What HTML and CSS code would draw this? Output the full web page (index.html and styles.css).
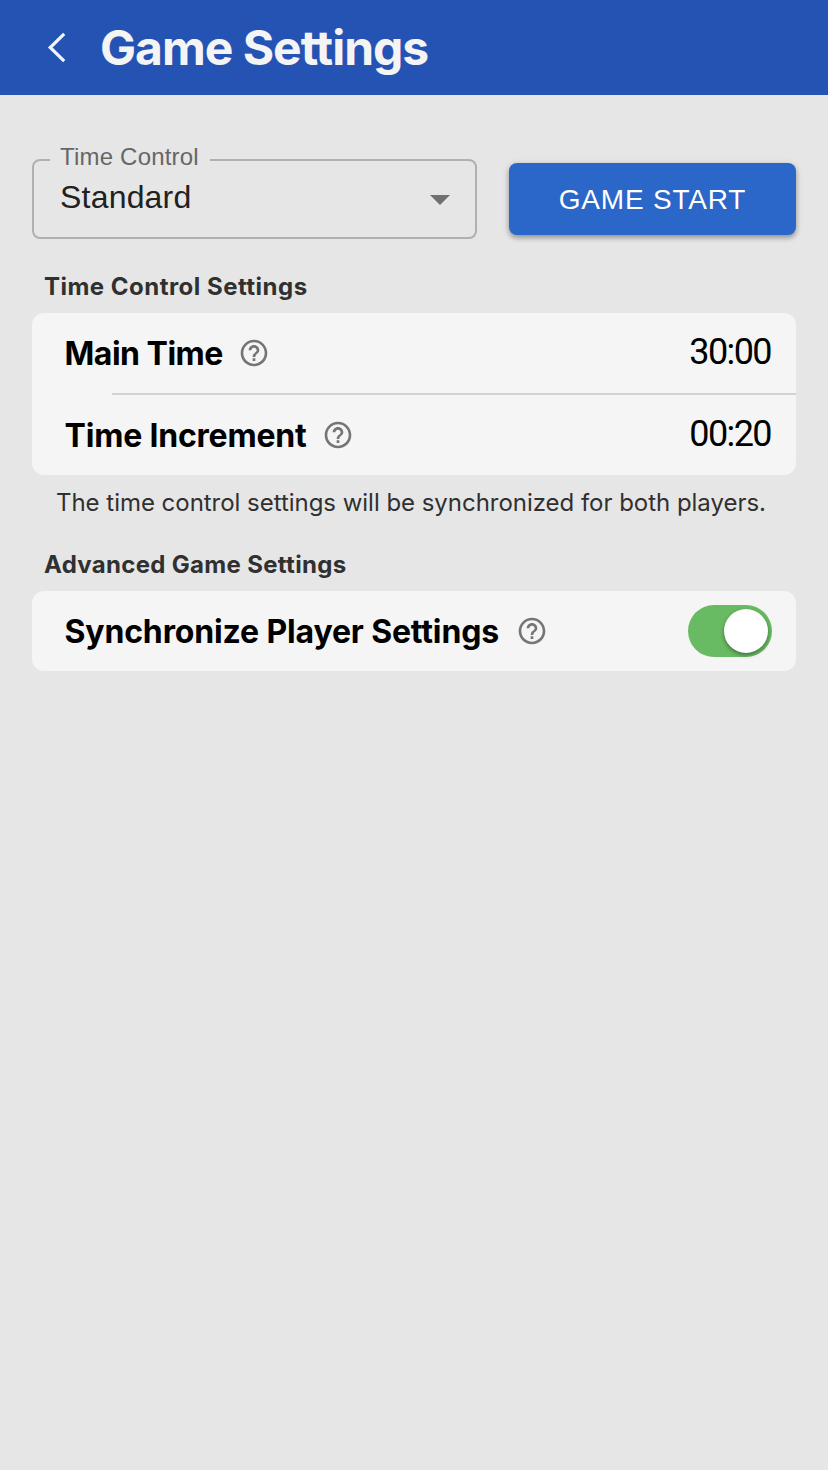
FILE: index.html
```html
<!DOCTYPE html>
<html lang="en">
<head>
<meta charset="utf-8">
<title>Game Settings</title>
<link rel="stylesheet" href="styles.css">
</head>
<body>
<svg class="sprite" aria-hidden="true">
  <symbol id="help" viewBox="0 0 24 24"><path d="M11 18h2v-2h-2v2zm1-16C6.48 2 2 6.48 2 12s4.480 10 10 10 10-4.480 10-10S17.520 2 12 2zm0 18c-4.410 0-8-3.590-8-8s3.590-8 8-8 8 3.590 8 8-3.590 8-8 8zm0-14c-2.210 0-4 1.790-4 4h2c0-1.100.9-2 2-2s2 .9 2 2c0 2-3 1.750-3 5h2c0-2.250 3-2.500 3-5 0-2.210-1.790-4-4-4z"/></symbol>
</svg>
<header class="header">
  <svg class="back" viewBox="0 0 20 32"><path d="M17.200 1.800 3.200 15.500l14 13.700"/></svg>
  <h1 class="title"><span>Game Settings</span></h1>
</header>
<main class="main">
  <div class="controls">
    <fieldset class="select">
      <legend class="select-label"><span class="label-text">Time Control</span></legend>
      <div class="select-value"><span class="value-text">Standard</span><svg class="arrow" viewBox="0 0 20 10"><path d="M0 0h20L10 10z"/></svg></div>
    </fieldset>
    <button class="start" type="button"><span>GAME START</span></button>
  </div>
  <h2 class="section-title time-title">Time Control Settings</h2>
  <section class="card">
    <div class="row divided"><span class="row-label main-label">Main Time</span><svg class="help"><use href="#help"/></svg><span class="time">30:00</span></div>
    <div class="row"><span class="row-label increment-label">Time Increment</span><svg class="help"><use href="#help"/></svg><span class="time">00:20</span></div>
  </section>
  <p class="note">The time control settings will be synchronized for both players.</p>
  <h2 class="section-title advanced-title">Advanced Game Settings</h2>
  <section class="card">
    <div class="row"><span class="row-label sync-label">Synchronize Player Settings</span><svg class="help"><use href="#help"/></svg><span class="switch"><span class="knob"></span></span></div>
  </section>
</main>
</body>
</html>
```

FILE: styles.css
```css
* { box-sizing: border-box; }
body { margin: 0; min-height: 1470px; background: #e6e6e6; font-family: Inter, "Liberation Sans", sans-serif; }
.sprite { display: none; }
.header { height: 95px; background: #2553b4; display: flex; align-items: center; padding-left: 47px; }
.back { width: 20px; height: 32px; fill: none; stroke: #f4f4f4; stroke-width: 3.2; }
.title { margin: 1px 0 0 33px; color: #f4f4f4; font-size: 48px; line-height: 58px; font-weight: 700; letter-spacing: -1px; white-space: nowrap; font-variant-ligatures: none; }
.main { padding: 50px 32px 0; }
.controls { display: flex; height: 94px; gap: 32px; align-items: flex-start; font-family: "Liberation Sans", Arial, sans-serif; }
.select { width: 445px; height: 94px; margin: 0; padding: 0 25px 0 26px; border: 2px solid #b0b0b0; border-radius: 8px; min-width: 0; }
.select-label { margin-left: -10px; padding: 0 11px 0 10px; height: 30px; line-height: 24px; font-size: 24px; color: #666; white-space: nowrap; letter-spacing: 0.2px; }
.select-value { display: flex; justify-content: space-between; align-items: center; height: 46px; font-size: 32px; line-height: 46px; color: #212121; letter-spacing: 0.2px; }
.value-text { padding-bottom: 2px; }
.arrow { width: 20px; height: 10px; fill: #707070; margin-top: 4px; }
.start { width: 287px; height: 72px; margin: 18px 0 0; padding: 1px 0 0; border: 0; border-radius: 8px; background: #2b66c9; color: #fff; font: 28px "Liberation Sans", Arial, sans-serif; letter-spacing: 0.8px; box-shadow: 0 3px 5px rgba(0,0,0,.3), 0 1px 8px rgba(0,0,0,.1); }
.section-title { margin: 0; padding-left: 12px; font-size: 24px; line-height: 30px; font-weight: 700; color: #303030; letter-spacing: 0.48px; white-space: nowrap; }
.time-title { margin-top: 33px; margin-bottom: 11px; }
.card { background: #f5f5f5; border-radius: 12px; }
.row { height: 80px; display: flex; align-items: center; padding: 0 24px 0 32.500px; }
.divided { height: 82px; padding-bottom: 2px; background: linear-gradient(#d2d2d2, #d2d2d2) right bottom / 684px 2px no-repeat; }
.row-label { flex: none; color: #000; font-size: 32px; line-height: 40px; font-weight: 700; white-space: nowrap; padding-top: 2px; }
.main-label { width: 158.500px; letter-spacing: -0.5px; }
.increment-label { width: 242.500px; letter-spacing: -0.2px; }
.sync-label { width: 436.500px; letter-spacing: -0.15px; }
.help { width: 32px; height: 32px; margin-left: 15px; fill: #757575; flex: none; }
.time { margin-left: auto; margin-right: 1px; font: 36px/40px Roboto, sans-serif; letter-spacing: -1.6px; color: #000; padding-bottom: 2px; }
.note { margin: 13px 0 0 24px; font-size: 24px; line-height: 30px; color: #303030; letter-spacing: -0.03px; white-space: nowrap; }
.advanced-title { margin: 32px 0 11px; letter-spacing: 0.31px; }
.switch { margin-left: auto; width: 84px; height: 52px; border-radius: 26px; background: #69bb63; padding: 4px; display: flex; justify-content: flex-end; }
.knob { width: 44px; height: 44px; border-radius: 50%; background: #fff; box-shadow: 0 2px 4px rgba(0,0,0,.4); }
```
